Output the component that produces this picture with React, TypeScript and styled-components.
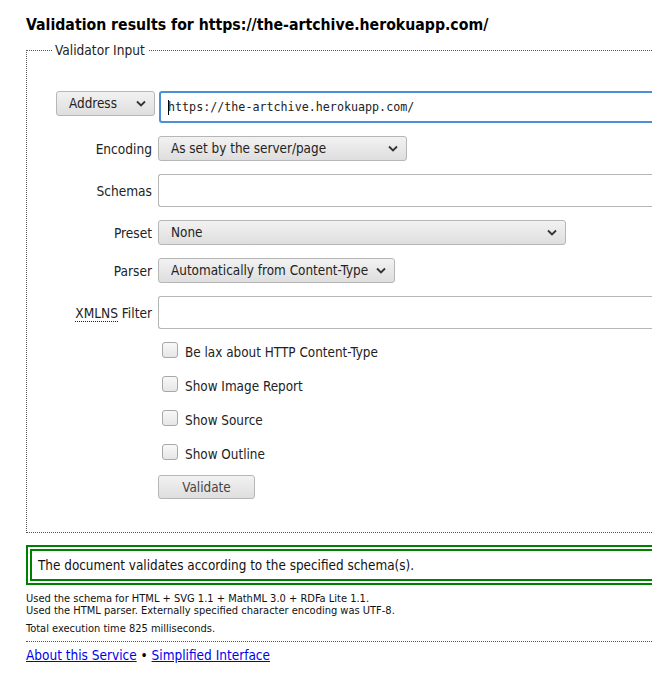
import styled, { createGlobalStyle } from "styled-components";

const GlobalStyle = createGlobalStyle`
	html, body {
		margin: 0;
		padding: 0;
		background: #fff;
	}
	body {
		font-family: "DejaVu Sans Condensed", "DejaVu Sans", sans-serif;
		color: #000;
		overflow: hidden;
	}
`;

const Page = styled("div")`
	width: 652px;
	height: 676px;
	overflow: hidden;
	padding: 0 0 0 26px;
	box-sizing: border-box;
`;

const Title = styled("h1")`
	margin: 0;
	padding-top: 15px;
	font-size: 15.7px;
	line-height: 20px;
	font-weight: bold;
	white-space: nowrap;
`;

const Fieldset = styled("fieldset")`
	width: 680px;
	margin: 7px 0 0;
	padding: 33px 0 33px 29px;
	border: 1px dotted #555;
	box-sizing: border-box;
`;

const Legend = styled("legend")`
	margin-left: -4px;
	padding: 0 3px;
	font-size: 13.6px;
	color: #222;
`;

const Form = styled("div")`
	display: grid;
	grid-template-columns: 99px 1fr;
	column-gap: 3px;
	row-gap: 13px;
	align-items: center;
`;

const Label = styled("label")`
	justify-self: end;
	padding-right: 3px;
	font-size: 13.6px;
	color: #222;
`;

const Abbr = styled("abbr")`
	text-decoration: none;
	border-bottom: 1px dotted #222;
`;

const SelectBox = styled("div")<{ $width: number }>`
	width: ${({ $width }) => $width}px;
	height: 25px;
	box-sizing: border-box;
	align-self: start;
	display: flex;
	align-items: center;
	justify-content: space-between;
	padding: 0 8px 0 12px;
	border: 1px solid #b6b6b6;
	border-radius: 3px;
	background: linear-gradient(#f2f2f2, #dedede);
	font-size: 13.4px;
	color: #222;
	white-space: nowrap;
`;

const Chevron = styled("svg")`
	flex: none;
	margin-left: 6px;
`;

const TextInput = styled("div")<{ $focused?: boolean }>`
	height: ${({ $focused }) => ($focused ? 32 : 33)}px;
	box-sizing: border-box;
	border: ${({ $focused }) => ($focused ? "2px solid #4a90d9" : "1px solid #b6b6b6")};
	border-right: none;
	border-radius: 3px 0 0 3px;
	margin-left: ${({ $focused }) => ($focused ? 1 : 0)}px;
	display: flex;
	align-items: center;
	padding-left: 7px;
	font-family: "DejaVu Sans Mono", monospace;
	font-size: 11.7px;
	color: #222;
`;

const Caret = styled("span")`
	display: inline-block;
	width: 1px;
	height: 15px;
	background: #000;
	margin-right: -1px;
`;

const Checks = styled("div")`
	grid-column: 2;
	display: flex;
	flex-direction: column;
	gap: 17px;
	padding: 0 0 0 4px;
`;

const CheckRow = styled("label")`
	display: flex;
	align-items: flex-start;
	gap: 7px;
	font-size: 13.4px;
	color: #222;
	height: 17px;
`;

const CheckText = styled("span")`
	padding-top: 3px;
	line-height: 16px;
`;

const Box = styled("span")`
	flex: none;
	width: 16px;
	height: 16px;
	box-sizing: border-box;
	border: 1px solid #a8a8a8;
	border-radius: 3px;
	background: linear-gradient(#f8f8f8, #e6e6e6);
`;

const Button = styled("div")`
	grid-column: 2;
	width: 97px;
	height: 24px;
	box-sizing: border-box;
	margin-top: 1px;
	display: flex;
	align-items: center;
	justify-content: center;
	border: 1px solid #b6b6b6;
	border-radius: 3px;
	background: linear-gradient(#f2f2f2, #dedede);
	font-size: 13.4px;
	color: #444;
`;

const Success = styled("div")`
	width: 680px;
	margin-top: 12px;
	box-sizing: border-box;
	border: 6px double #008000;
	padding: 7px 0 6px 6px;
	font-size: 13.4px;
	color: #111;
`;

const Details = styled("p")`
	margin: 8px 0 0;
	font-size: 11px;
	line-height: 12px;
	color: #111;
`;

const Timing = styled("p")`
	margin: 6px 0 0;
	font-size: 11px;
	line-height: 12px;
	color: #111;
`;

const Rule = styled("hr")`
	margin: 6px 0 0;
	width: 640px;
	border: none;
	border-top: 1px dotted #555;
`;

const Footer = styled("p")`
	margin: 5px 0 0;
	font-size: 13.5px;
	color: #000;
`;

const Link = styled("a")`
	color: #0000ee;
	text-decoration: underline;
`;

const Down = () => (
	<Chevron width="10" height="7" viewBox="0 0 10 7">
		<path d="M1 1.5 L5 5.5 L9 1.5" fill="none" stroke="#333" strokeWidth="1.8" />
	</Chevron>
);

const Select = ({ width, value }: { width: number; value: string }) => (
	<SelectBox $width={width}>
		<span>{value}</span>
		<Down />
	</SelectBox>
);

const options = [
	"Be lax about HTTP Content-Type",
	"Show Image Report",
	"Show Source",
	"Show Outline",
];

const App = () => {
	return (
		<>
			<GlobalStyle />
			<Page>
				<Title>Validation results for https://the-artchive.herokuapp.com/</Title>
				<Fieldset>
					<Legend>Validator Input</Legend>
					<Form>
						<Select width={99} value="Address" />
						<TextInput $focused>
							<Caret />
							https://the-artchive.herokuapp.com/
						</TextInput>

						<Label>Encoding</Label>
						<Select width={249} value="As set by the server/page" />

						<Label>Schemas</Label>
						<TextInput />

						<Label>Preset</Label>
						<Select width={408} value="None" />

						<Label>Parser</Label>
						<Select width={237} value="Automatically from Content-Type" />

						<Label>
							<Abbr title="XML namespaces">XMLNS</Abbr> Filter
						</Label>
						<TextInput />

						<Checks>
							{options.map((text) => (
								<CheckRow key={text}>
									<Box />
									<CheckText>{text}</CheckText>
								</CheckRow>
							))}
						</Checks>
						<Button>Validate</Button>
					</Form>
				</Fieldset>
				<Success>The document validates according to the specified schema(s).</Success>
				<Details>
					Used the schema for HTML + SVG 1.1 + MathML 3.0 + RDFa Lite 1.1.
					<br />
					Used the HTML parser. Externally specified character encoding was UTF-8.
				</Details>
				<Timing>Total execution time 825 milliseconds.</Timing>
				<Rule />
				<Footer>
					<Link href="#">About this Service</Link> • <Link href="#">Simplified Interface</Link>
				</Footer>
			</Page>
		</>
	);
};

export default App;
